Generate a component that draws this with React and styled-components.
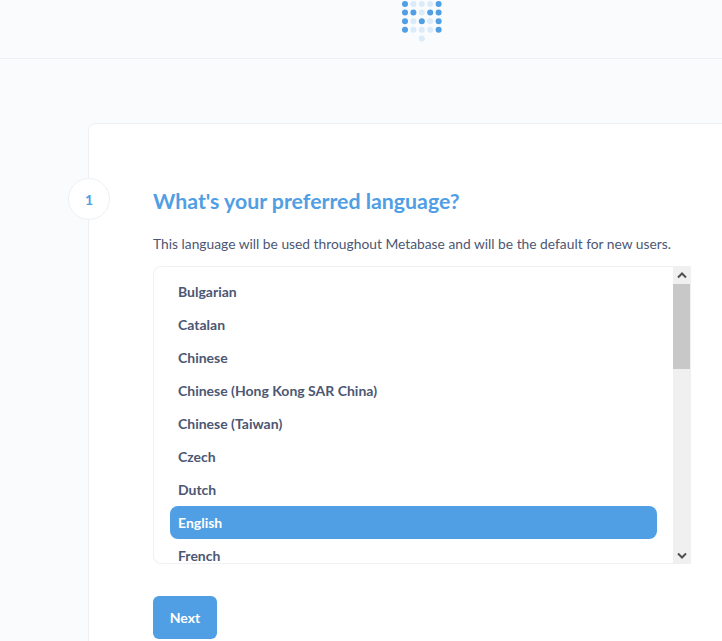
import styled, { createGlobalStyle } from "styled-components";

const languages = [
  "Bulgarian",
  "Catalan",
  "Chinese",
  "Chinese (Hong Kong SAR China)",
  "Chinese (Taiwan)",
  "Czech",
  "Dutch",
  "English",
  "French",
];

const logoRows = [
  [1, 0, 0, 0, 1],
  [1, 1, 0, 1, 1],
  [1, 0, 1, 0, 1],
  [1, 0, 0, 0, 1],
];

const GlobalStyle = createGlobalStyle`
  html, body {
    margin: 0;
    height: 100%;
    overflow: hidden;
    background: #f9fbfc;
  }
  body {
    font-family: Lato, "Open Sans", sans-serif;
    color: #4c5773;
  }
`;

const Page = styled.div`
  width: 722px;
  height: 641px;
  overflow: hidden;
`;

/* the page behind the shot is wider than the window, so the logo sits right of centre */
const Header = styled.header`
  width: 843px;
  height: 58px;
  border-bottom: 1px solid #eef0f3;
  display: flex;
  justify-content: center;
`;

const Logo = styled.svg`
  width: 42px;
  height: 44px;
  display: block;
  flex: none;
`;

const Card = styled.section`
  position: relative;
  box-sizing: border-box;
  width: 720px;
  height: 600px;
  margin: 64px 0 0 88px;
  padding: 63px 0 0 64px;
  background: #fff;
  border: 1px solid #eef0f3;
  border-radius: 8px;
`;

const StepBadge = styled.div`
  position: absolute;
  left: -21px;
  top: 54px;
  box-sizing: border-box;
  width: 42px;
  height: 42px;
  display: flex;
  align-items: center;
  justify-content: center;
  border: 1px solid #eef0f3;
  border-radius: 50%;
  background: #fff;
  color: #509ee3;
  font-size: 14px;
  font-weight: 700;
`;

const Title = styled.h2`
  margin: 0;
  color: #509ee3;
  font-size: 21.3px;
  line-height: 28px;
  font-weight: 700;
`;

const Description = styled.p`
  margin: 20px 0 0;
  font-size: 13.8px;
  line-height: 18px;
`;

const ListBox = styled.div`
  box-sizing: border-box;
  width: 538px;
  height: 298px;
  margin-top: 13px;
  display: flex;
  border: 1px solid #eef0f3;
  border-right: 0;
  border-radius: 8px 0 0 8px;
  overflow: hidden;
`;

const Options = styled.ul`
  flex: 1;
  margin: 0;
  padding: 8px 16px 0;
  list-style: none;
`;

const Option = styled.li`
  box-sizing: border-box;
  height: 33px;
  padding: 0 8px;
  display: flex;
  align-items: center;
  border-radius: 8px;
  font-size: 14px;
  font-weight: 700;
  background: ${(p) => (p.$selected ? "#509ee3" : "transparent")};
  color: ${(p) => (p.$selected ? "#fff" : "#4c5773")};
`;

const Scrollbar = styled.div`
  width: 18px;
  flex: none;
  margin-top: -1px;
  margin-bottom: -1px;
  display: flex;
  flex-direction: column;
  background: #f0f0f0;
`;

const ArrowButton = styled.div`
  height: 18px;
  flex: none;
  display: flex;
  align-items: center;
  justify-content: center;
  margin-top: ${(p) => (p.$end ? "auto" : "0")};
  color: #505050;
`;

const Thumb = styled.div`
  height: 85px;
  width: 17px;
  background: #c8c8c8;
`;

const NextButton = styled.button`
  display: block;
  width: 64px;
  height: 43px;
  margin-top: 32px;
  padding: 0;
  border: 0;
  border-radius: 6px;
  background: #509ee3;
  color: #fff;
  font-family: inherit;
  font-size: 14px;
  font-weight: 700;
`;

const Arrow = ({ up }) => (
  <svg width="10" height="7" viewBox="0 0 10 7">
    <path
      d={up ? "M1 5.5 L5 1.5 L9 5.5" : "M1 1.5 L5 5.5 L9 1.5"}
      fill="none"
      stroke="currentColor"
      strokeWidth="2"
    />
  </svg>
);

export default function App() {
  return (
    <Page>
      <GlobalStyle />
      <Header>
        <Logo viewBox="0 0 42 44">
          {logoRows.map((row, y) =>
            row.map((on, x) => (
              <circle
                key={`${x}-${y}`}
                cx={4 + x * 8.4}
                cy={4 + y * 8.6}
                r="3"
                fill={on ? "#509ee3" : "#dcebf9"}
              />
            ))
          )}
          <circle cx="20.8" cy="38.6" r="3" fill="#dcebf9" />
        </Logo>
      </Header>
      <Card>
        <StepBadge>1</StepBadge>
        <Title>What's your preferred language?</Title>
        <Description>
          This language will be used throughout Metabase and will be the default for new users.
        </Description>
        <ListBox>
          <Options>
            {languages.map((name) => (
              <Option key={name} $selected={name === "English"}>
                {name}
              </Option>
            ))}
          </Options>
          <Scrollbar>
            <ArrowButton>
              <Arrow up />
            </ArrowButton>
            <Thumb />
            <ArrowButton $end>
              <Arrow />
            </ArrowButton>
          </Scrollbar>
        </ListBox>
        <NextButton>Next</NextButton>
      </Card>
    </Page>
  );
}
